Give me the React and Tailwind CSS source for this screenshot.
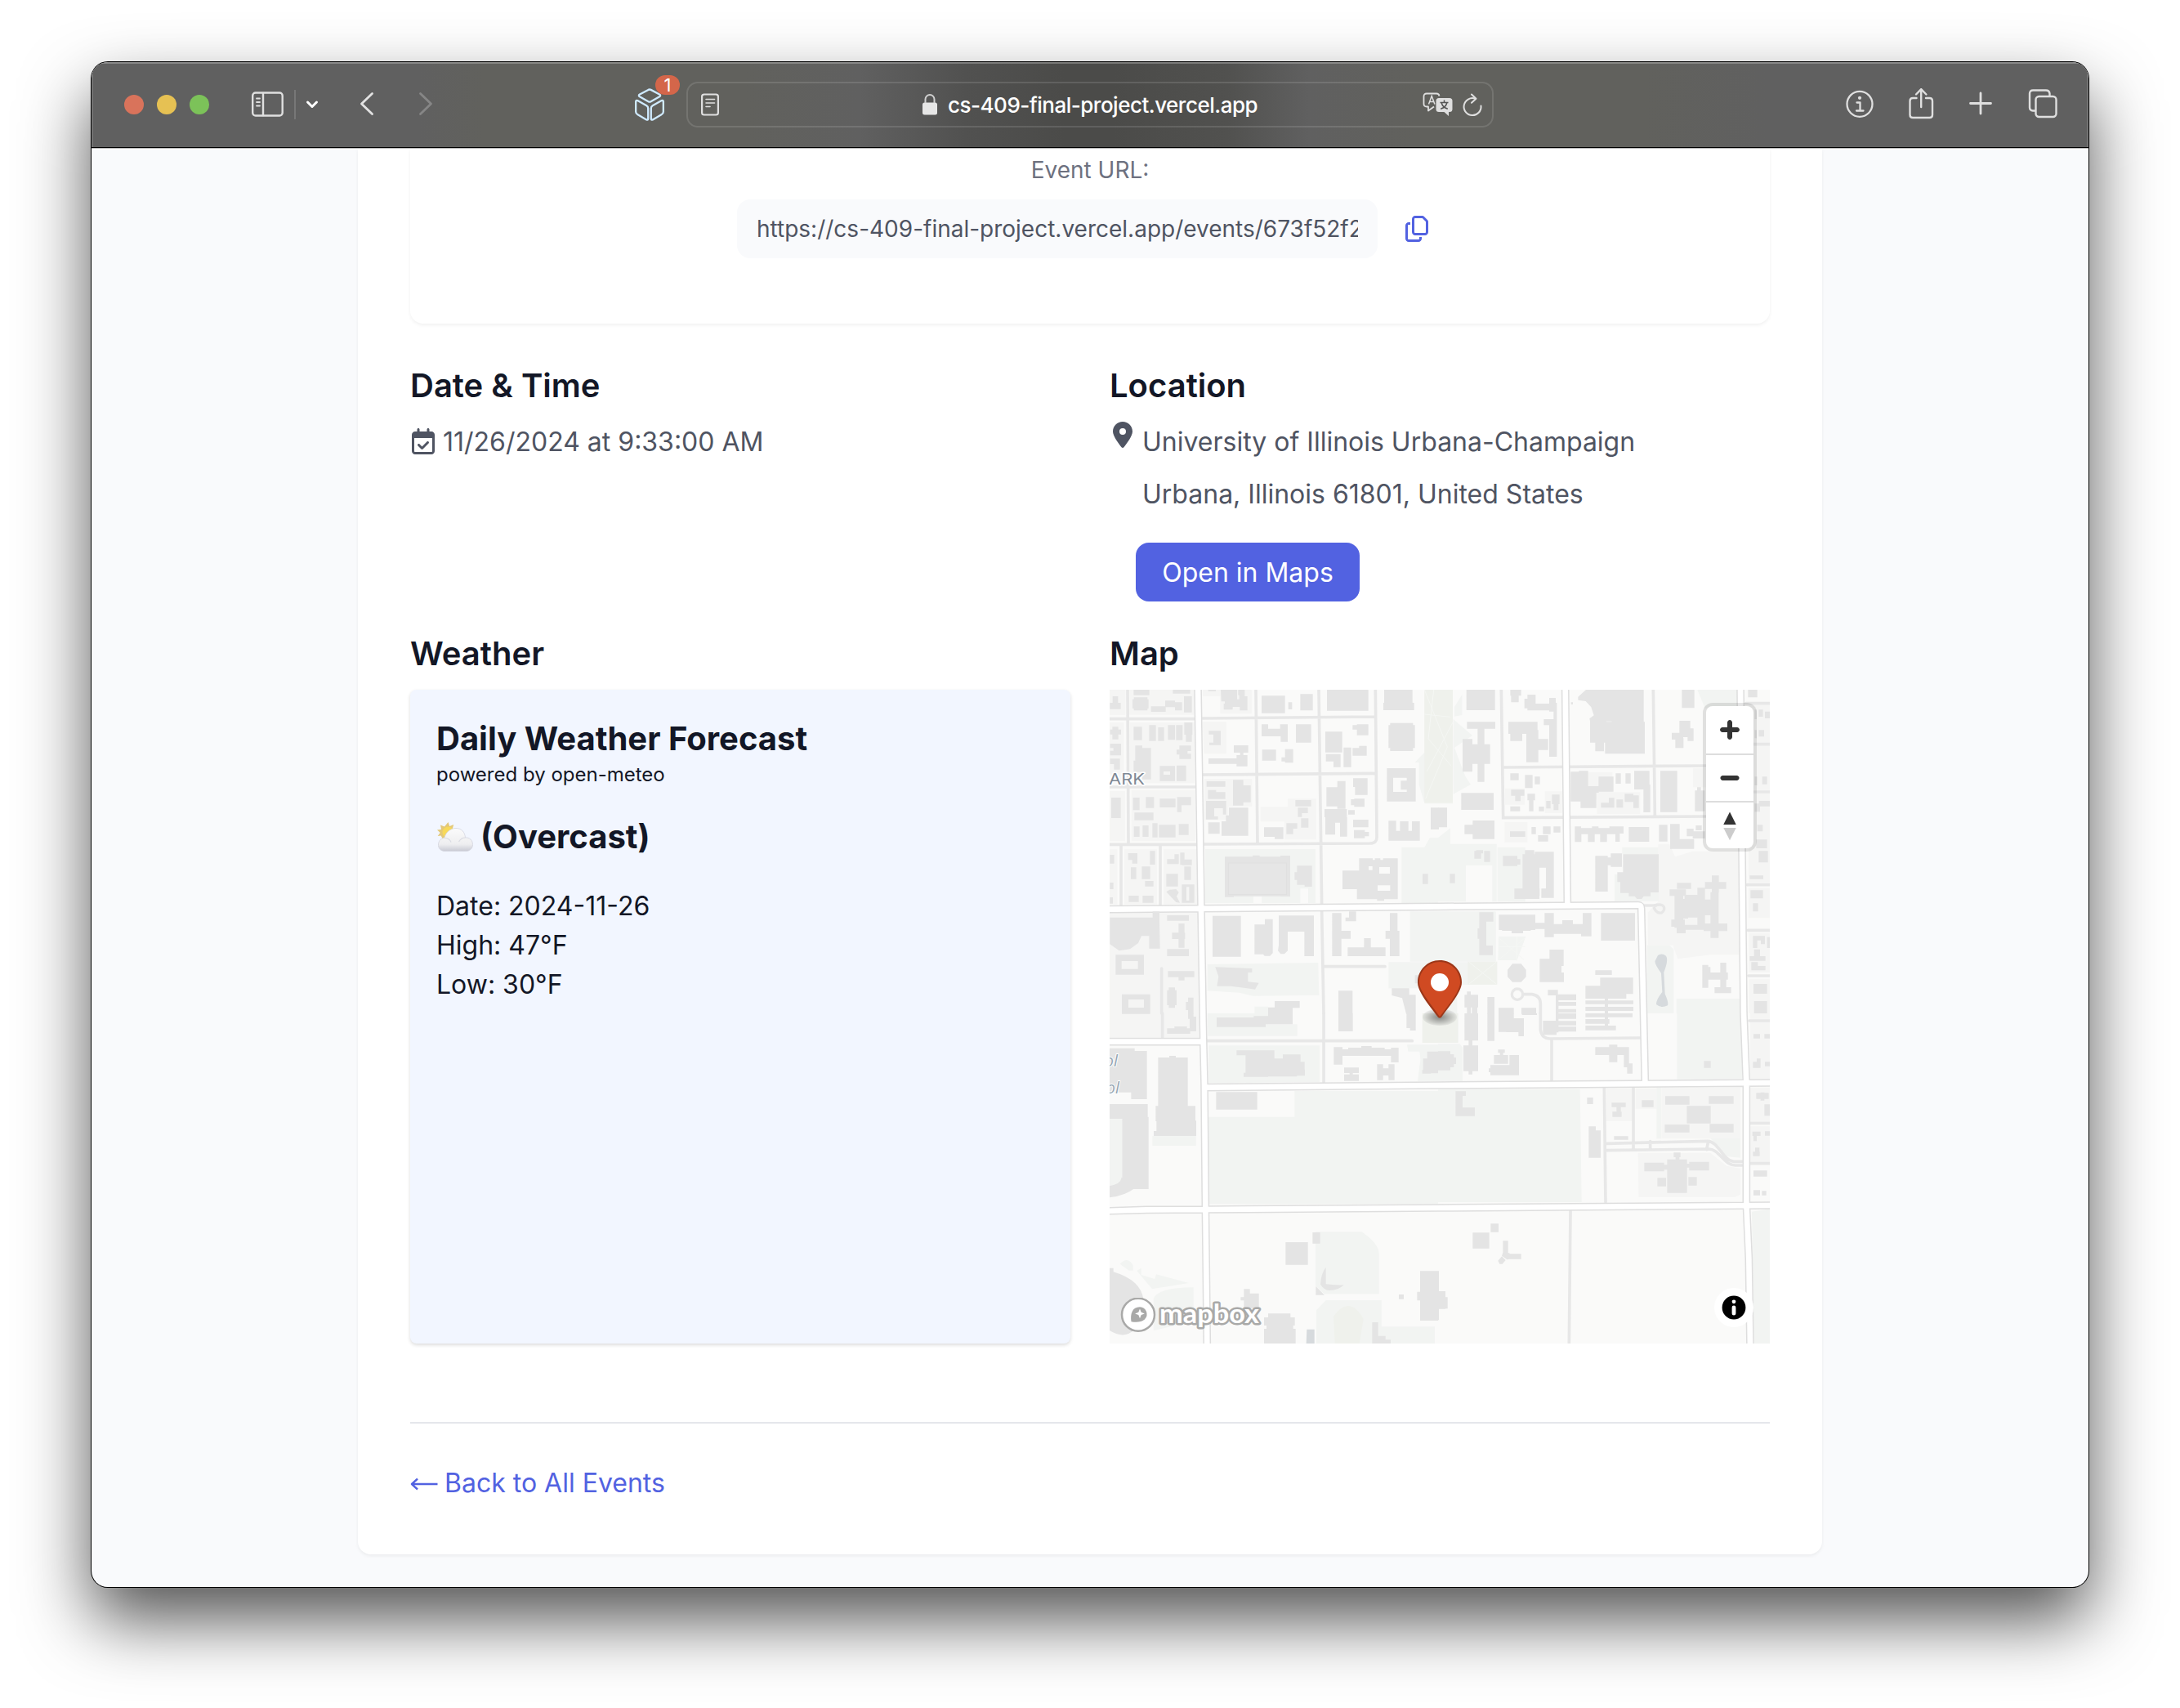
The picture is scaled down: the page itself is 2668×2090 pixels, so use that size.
import React from "react";
import { FaRegCopy, FaRegCalendarCheck, FaLocationDot } from "react-icons/fa6";

/* ---------- Map data: four tiles, each in its own coordinates ---------- */

const r = (list) => list.map(([x, y, w, h]) => `M${x} ${y}h${w}v${h}h${-w}z`).join("");

const BUILDINGS_NW =
  r([
    [25, 60, 40, 23], [35, 36, 20, 25], [112, 12, 58, 20], [113, 40, 50, 48], [108, 47, 59, 34], [176, 73, 54, 20],
    [228, 52, 36, 24], [264, 58, 26, 30], [297, 36, 29, 59], [256, 12, 64, 14], [386, 12, 28, 5],
    [582, 34, 86, 64], [680, 58, 14, 26], [724, 28, 46, 60], [822, 12, 152, 77], [1032, 12, 104, 60], [1029, 60, 113, 27],
    [34, 148, 22, 46], [26, 158, 40, 18], [112, 148, 31, 49], [169, 142, 25, 58], [202, 150, 22, 50],
    [238, 142, 26, 54], [268, 142, 24, 55], [298, 132, 30, 45], [304, 177, 22, 26],
    [480, 216, 53, 27], [490, 252, 40, 41], [503, 243, 12, 9], [387, 264, 104, 20],
    [708, 139, 56, 67], [584, 232, 51, 40], [668, 230, 30, 50], [655, 260, 30, 15], [816, 166, 62, 76], [932, 139, 42, 40], [916, 142, 18, 16],
    [1054, 134, 84, 103], [1048, 142, 97, 84], [118, 217, 26, 56], [112, 272, 34, 42], [144, 226, 32, 115],
    [280, 217, 30, 49], [270, 232, 12, 18], [308, 217, 15, 20], [308, 247, 15, 19], [26, 210, 40, 16], [38, 226, 28, 10], [26, 236, 40, 17], [26, 265, 36, 20], [40, 285, 22, 20],
    [270, 290, 35, 57], [883, 224, 28, 72], [916, 226, 52, 28], [940, 218, 28, 12], [818, 248, 54, 27], [846, 275, 26, 21],
    [30, 408, 35, 75], [110, 408, 24, 46], [157, 406, 30, 40], [208, 412, 58, 32], [272, 406, 51, 30], [272, 430, 16, 31],
    [115, 463, 70, 28], [113, 514, 21, 38], [145, 510, 22, 42], [181, 502, 19, 52], [205, 508, 61, 46], [278, 505, 36, 40],
    [380, 348, 69, 20], [385, 380, 30, 10], [385, 388, 64, 25], [477, 343, 38, 94], [515, 363, 27, 62], [386, 499, 42, 42],
    [706, 417, 58, 23], [715, 445, 37, 20], [715, 465, 15, 14], [727, 484, 27, 34], [591, 517, 71, 35], [630, 550, 32, 10], [673, 502, 40, 20], [673, 520, 25, 22],
    [820, 370, 40, 70], [860, 347, 30, 102], [813, 450, 82, 30], [816, 480, 36, 64], [850, 480, 20, 20], [870, 480, 26, 71], [925, 337, 46, 61], [918, 337, 53, 32],
    [922, 412, 38, 30], [910, 414, 14, 22], [900, 454, 24, 16], [918, 489, 56, 28], [921, 527, 40, 30], [958, 534, 18, 16], [1203, 445, 30, 80],
    [25, 618, 16, 32], [92, 612, 34, 25], [107, 635, 19, 15], [172, 604, 19, 50], [102, 664, 20, 43], [142, 661, 31, 46], [154, 714, 31, 20],
    [94, 768, 37, 23], [145, 768, 40, 26], [25, 720, 13, 24], [25, 774, 11, 23], [262, 616, 16, 36], [235, 634, 40, 18],
    [283, 610, 16, 45], [290, 635, 36, 21], [298, 661, 25, 49], [232, 688, 43, 46],
    [447, 625, 240, 145], [549, 620, 26, 10], [651, 621, 36, 10], [447, 765, 33, 8], [651, 765, 36, 6], [712, 658, 55, 70], [703, 682, 15, 28], [740, 725, 27, 10], [1173, 688, 20, 37],
    [235, 840, 80, 20], [277, 870, 22, 89], [253, 904, 48, 23], [235, 964, 80, 26],
    [238, 1045, 97, 22], [277, 1067, 22, 12], [235, 1115, 35, 55], [241, 1105, 23, 75], [312, 1142, 20, 60], [304, 1158, 20, 30],
    [402, 842, 104, 150], [841, 832, 34, 158], [875, 897, 34, 29], [903, 826, 26, 36], [890, 848, 20, 14],
    [1053, 832, 28, 158], [1037, 897, 51, 29], [1058, 926, 30, 64], [898, 958, 139, 32], [958, 924, 25, 34],
    [864, 1117, 52, 85], [1145, 1060, 15, 30], [630, 1155, 92, 25], [606, 1178, 90, 24],
  ]) +
  "M432 12h60v35h8v-15h-4v-20h24v24h10v52h-28v-13h-26v10h-33v-22h4v-8h-13z" +
  "M388 163h44v52h-42v-9h15v-30h-17z" +
  "M582 139h24v16h44v-16h28v64h-26v-20h-70z" +
  "M208 292h56v55h-56zM222 312v12h24v-12z" +
  "M1042 300h106v122h-106zM1065 335v52h50v-8h-22v-33h22v-11z" +
  "M378 420h74v50h-12v-23h-32v30h14v11h-44z" +
  "M462 445h71v103h-98v-53h16v-22h11z" +
  "M1048 493h28v37h14v-35h31v35h13v-35h29v71h-115z" +
  "M289 727h46v67h-46zM306 736v50h10v-50z" +
  "M232 754l12-8 24-2 10 12-8 14 12 24-14-2z" +
  "M940 631h50v6h8v-6h20v6h10v-6h54v150h-50v6h-26v-6h-74v-37h-53v-68h61zM975 660v14h14v-14zM1014 663v24h39v-24zM1008 730v20h46v-20z" +
  "M25 848h157v-22h25v40l2 96h-40v-46h-28l-12 26-30 22-40 6-34-24z" +
  "M46 985h104v73h-104zM68 1008v29h60v-29z" +
  "M69 1130h104v72h-104zM93 1149v30h57v-30z" +
  "M556 874h38v-20h29v125l-10 10h-20l-5-6h-32z" +
  "M645 841h129v149h-35v-90h-61v70l-12 12h-14l-10-12 3-20z" +
  "M412 1030l135 5v15h-15v34l40 4-14 24-90-12-50 0 6-35z" +
  "M1060 1108h64v24h24v70h-35l-15-58-38-10z";

const BUILDINGS_NE =
  r([
    [104, 12, 105, 75], [106, 130, 104, 25], [145, 155, 25, 195], [90, 193, 36, 120], [120, 212, 71, 72], [85, 391, 119, 62], [0, 445, 33, 72],
    [127, 492, 80, 68], [97, 508, 32, 34], [265, 12, 40, 22], [268, 12, 28, 46], [328, 30, 30, 58], [317, 45, 20, 35], [355, 63, 70, 25], [408, 42, 24, 50],
    [258, 130, 107, 44], [265, 170, 44, 30], [324, 160, 44, 118], [366, 193, 38, 40], [388, 120, 48, 22], [408, 140, 28, 118], [424, 60, 12, 80],
    [265, 319, 31, 25], [319, 325, 28, 48], [355, 331, 19, 28], [268, 379, 49, 22], [283, 395, 20, 26], [265, 440, 36, 18],
    [328, 394, 28, 24], [334, 410, 16, 48], [370, 441, 19, 17], [397, 420, 16, 28], [418, 397, 28, 35], [424, 430, 18, 24],
    [264, 532, 56, 20], [343, 516, 16, 26], [385, 514, 28, 28], [367, 546, 37, 23], [424, 514, 25, 22], [488, 58, 7, 8],
    [638, 12, 117, 160], [613, 130, 146, 117], [558, 128, 60, 78], [577, 204, 32, 34],
    [895, 12, 46, 67], [886, 126, 40, 60], [858, 170, 42, 25], [871, 190, 30, 36], [916, 154, 22, 46],
    [487, 313, 30, 76], [517, 310, 34, 80], [487, 389, 36, 33], [523, 386, 58, 60], [550, 366, 40, 24], [589, 331, 55, 55],
    [652, 319, 19, 38], [688, 319, 19, 37], [598, 427, 49, 18], [627, 409, 20, 30], [655, 415, 24, 30], [685, 394, 32, 30], [717, 400, 20, 46],
    [720, 310, 56, 68], [754, 360, 25, 102], [816, 310, 62, 151], [943, 382, 36, 76], [951, 370, 14, 20],
    [811, 508, 31, 61], [852, 505, 35, 91], [852, 560, 88, 36], [913, 522, 25, 28], [946, 510, 22, 18], [935, 532, 45, 26],
    [700, 516, 75, 54], [133, 604, 25, 28], [169, 604, 22, 40], [140, 601, 25, 12], [43, 688, 19, 34], [238, 622, 53, 37], [290, 634, 12, 20],
    [310, 616, 62, 164], [319, 601, 34, 20], [280, 742, 68, 38], [355, 607, 70, 58], [396, 660, 29, 116], [379, 742, 30, 34], [355, 742, 18, 26],
    [577, 622, 46, 131], [590, 628, 50, 28], [634, 613, 41, 49], [679, 616, 131, 140], [658, 682, 50, 36], [669, 710, 62, 48], [700, 750, 80, 20],
    [151, 829, 52, 34], [151, 829, 26, 157], [145, 888, 20, 38], [160, 951, 41, 35],
    [223, 838, 134, 56], [235, 880, 105, 17], [270, 895, 42, 11], [355, 868, 37, 22], [598, 832, 125, 101],
    [373, 1000, 80, 85], [409, 966, 52, 60], [430, 1050, 32, 35], [577, 1042, 61, 17], [595, 1069, 121, 60], [541, 1099, 150, 47], [403, 1114, 37, 20], [432, 1130, 75, 22],
    [432, 1158, 75, 14], [432, 1184, 75, 13], [432, 1130, 10, 70], [541, 1153, 176, 13], [541, 1176, 176, 15], [612, 1146, 12, 54],
    [97, 1132, 50, 46], [106, 1120, 14, 80], [97, 1156, 50, 20], [124, 1176, 20, 24], [181, 1140, 26, 62], [222, 1180, 56, 22], [306, 1180, 54, 22],
    [877, 721, 52, 22], [850, 745, 60, 24], [868, 780, 50, 72], [868, 760, 32, 126], [856, 856, 50, 26], [876, 880, 33, 26], [900, 875, 100, 18], [905, 765, 50, 60], [900, 820, 75, 28],
    [952, 739, 28, 150], [1005, 694, 26, 62], [980, 718, 78, 25], [1000, 755, 30, 168], [980, 820, 50, 20], [975, 870, 87, 28], [980, 782, 25, 40],
    [970, 1022, 22, 84], [970, 1030, 30, 26], [1036, 1014, 22, 95], [990, 1050, 74, 26], [1015, 1104, 61, 22],
    [1138, 12, 34, 28], [1177, 85, 16, 26], [1200, 92, 18, 25], [1177, 160, 20, 24], [1162, 85, 8, 35], [1162, 160, 8, 30], [1190, 331, 18, 28], [1162, 331, 10, 32],
    [1178, 420, 40, 20], [1162, 430, 20, 30], [1172, 508, 20, 24], [1168, 562, 40, 32], [1177, 604, 34, 42], [1144, 694, 50, 13], [1147, 748, 46, 30], [1156, 796, 19, 30],
    [1156, 916, 16, 44], [1156, 916, 44, 16], [1185, 916, 15, 30], [1144, 990, 58, 17], [1160, 965, 22, 40], [1150, 1012, 24, 30], [1168, 1026, 34, 16], [1158, 1092, 50, 36], [1160, 1155, 48, 45], [1208, 920, 10, 40],
  ]) +
  "M543 12h100v116h-85l-2-10 16-12-10-30-20-22-28-4v-12z" +
  "M502 514h23v6h40v-6h24v6h40v-6h52v26h-14v30h-16v-28h-31v29h-25v-29h-20v29h-25v-29h-24v29h-24z" +
  "M391 832h34v40h31v-14h39v14h36v-40h32v85h-38v-9h-100v12h-34z" +
  "M255 1040l18-22h32l18 22v26l-18 19h-32l-18-19z" +
  "M720 768h36l-8 12h-18z";

const BUILDINGS_SW =
  r([
    [417, 15, 180, 35], [553, 10, 143, 30], [606, 0, 90, 20], [235, 55, 85, 20], [318, 12, 24, 54], [262, 48, 46, 12], [312, 0, 20, 20], [864, 0, 53, 66], [1114, 0, 34, 54], [1127, 50, 21, 13],
    [24, 138, 134, 152], [103, 138, 58, 177], [24, 128, 92, 14], [202, 162, 109, 178], [243, 156, 24, 10], [193, 340, 146, 56], [196, 394, 146, 56], [186, 432, 14, 18],
    [490, 136, 139, 18], [523, 140, 106, 78], [516, 218, 90, 15], [606, 166, 106, 66], [660, 151, 65, 40], [700, 178, 40, 30], [708, 206, 33, 23],
    [847, 124, 32, 64], [847, 132, 210, 24], [900, 126, 134, 20], [948, 120, 38, 10], [1057, 126, 28, 54],
    [885, 199, 54, 20], [885, 224, 54, 24], [905, 215, 12, 12], [1006, 187, 22, 58], [1048, 187, 22, 58], [1020, 202, 36, 26], [1175, 166, 55, 42], [1190, 140, 40, 80], [1172, 208, 32, 13],
    [415, 289, 151, 64], [24, 333, 140, 54], [70, 380, 97, 265], [670, 840, 82, 83], [769, 804, 28, 41],
    [517, 1012, 22, 70], [530, 1028, 42, 54], [505, 1042, 20, 12], [591, 1116, 113, 30], [606, 1102, 82, 30], [600, 1140, 98, 20], [591, 1158, 116, 54],
    [1164, 946, 66, 182], [1153, 1022, 20, 32], [1086, 1032, 18, 17], [988, 1134, 22, 78], [1005, 1184, 32, 28], [1030, 1198, 26, 14],
  ]) +
  "M24 632q40-4 44-30l48 30v10q-36 28-92 34z" +
  "M24 935h14v14q100 30 110 100t-30 110-94 5z" +
  "M818 932v62q30 4 66 3-20 20-52 20-20 0-34-22 2-40 20-63z" +
  "M781 1002l32 32h-32z";

const BUILDINGS_SE =
  r([
    [97, 0, 50, 100], [112, 96, 14, 24], [93, 118, 54, 94], [112, 210, 14, 14], [181, 0, 26, 101], [222, 0, 56, 68], [250, 18, 65, 51], [295, 60, 20, 24], [308, 0, 55, 6],
    [205, 153, 52, 32], [220, 133, 25, 12], [227, 145, 12, 10], [262, 153, 35, 40], [192, 190, 105, 37], [186, 202, 12, 14],
    [0, 139, 45, 70], [40, 150, 18, 48], [55, 162, 11, 24],
    [385, 27, 50, 52], [432, 0, 75, 20], [432, 28, 75, 16], [432, 49, 75, 18], [432, 0, 10, 70], [541, 0, 173, 14], [541, 21, 88, 17], [541, 45, 112, 17], [612, 0, 12, 45],
    [577, 124, 124, 29], [628, 115, 30, 64], [682, 150, 19, 48], [694, 184, 20, 37], [976, 175, 25, 25],
    [64, 286, 38, 17], [64, 286, 26, 91], [64, 346, 71, 31], [547, 309, 22, 24], [553, 415, 26, 115], [570, 430, 27, 100],
    [637, 328, 52, 16], [655, 340, 16, 24], [640, 361, 34, 19], [646, 451, 52, 13], [748, 319, 43, 25],
    [834, 304, 89, 31], [994, 304, 91, 28], [913, 340, 88, 64], [832, 408, 91, 29], [997, 406, 88, 31],
    [757, 548, 73, 32], [922, 545, 73, 32], [841, 536, 73, 123], [865, 511, 25, 17], [872, 526, 14, 12], [828, 556, 14, 18], [914, 552, 12, 14], [805, 604, 32, 31], [919, 601, 31, 31],
    [1158, 76, 24, 16], [1198, 76, 20, 16], [1156, 178, 28, 22], [1170, 166, 14, 30], [1200, 178, 18, 16], [1168, 292, 46, 22], [1184, 290, 14, 30], [1198, 334, 20, 42],
    [1154, 434, 30, 16], [1158, 445, 12, 24], [1200, 433, 18, 16], [1156, 508, 25, 16], [1164, 493, 16, 30], [1158, 577, 50, 22], [1158, 649, 24, 19], [1189, 652, 16, 16],
    [127, 805, 61, 58], [193, 772, 29, 31], [238, 835, 19, 46], [262, 883, 43, 19], [0, 1020, 27, 65], [15, 1042, 20, 42], [0, 946, 3, 180],
  ]) +
  "M238 878l24 2 6 20-14 4-20-14z" +
  "M220 908l14-16 14 14-12 14h-10z";

const PARKS = {
  nw: "M375 597H780V795H375zM1096 590H1230V795H1096zM1127 826H1230V1010H1127zM383 1020L790 1014 793 1133 550 1136 500 1124 383 1117zM1048 1012H1230V1108H1048zM1180 12H1230V430H1180L1160 360V280L1145 278 1180 242zM1200 555H1230V590H1180zM556 1175h50v25h-50z",
  ne: "M0 12H54V430H0zM56 120L126 180 60 225 100 330 120 360 56 395zM60 75L88 30V105L60 110zM0 555L45 520V578H215V790H0zM218 590H320V790H218zM0 826H108V1010H0zM108 826H212V1010H108zM222 918H322L290 1005H220zM648 690H810V788H648zM676 590H808V616H676zM952 12H1098V80H980zM768 950H850L865 965V1200H768zM875 1146H1112V1200H875zM0 1012H216V1095H70V1200H0z",
  sw: "M383 0H606V40H713V83H385zM388 118L795 118V252L388 256zM386 380H703V285H1230V700H388zM1116 115H1230V248H1155L1165 170 1162 140H1120zM24 388H70V600L60 630H24zM181 450H341V486H181zM780 802H950Q1012 845 1013 880V1030H812L780 1000zM818 1053H1022V1150H1218V1212H783V1090zM62 920Q90 890 110 925V944H95zM124 945L140 935V960L190 975 195 958 315 990 180 1012zM185 1048Q200 1006 332 1006V1130L185 1165z",
  se: "M0 278H521L527 693H0zM0 112H80L90 125V248H0zM877 0H1116V242H877zM802 272h17v188h-17zM1000 458H1110V530L1060 525zM1152 728L1218 718V1212H1160zM0 0H75V108H0z",
};

const BLOCKS = {
  nw: "M24 12H82V105H24zM97 12H334V104H97zM24 132H76V355H24zM98 132H336V355H98zM24 384H80V568H24zM104 380H338V568H104zM24 598H52V800H24zM78 598H198V800H78zM222 598H346V800H222zM366 130H452V247H370zM430 12H545V100H430zM366 12H430V35H366zM372 340H547V440H460V490H372zM578 442L678 442V412H782V562H666V496H578zM24 832H350V1200H24z",
  ne: "M246 374H318V434H246zM392 385H455V465H392zM244 498H328V572H244zM486 315H640V388H742V468H583V415H486zM808 580H850L870 625 935 605H1108V985H1000L880 1000 862 950H770V830L808 790zM1140 60H1218V720H1140zM1140 740H1218V850H1140zM1142 905H1218V1050H1142zM1142 1075H1218V1200H1142zM936 300H984V370H936z",
  sw: "M24 0H352V88H24z",
  se: "M618 275H712V395H618zM725 275H802V350H725zM820 272H1110V460H820zM734 512H1000L1060 560 1110 570V665L1090 674H736zM1146 0H1218V240H1146zM1146 272H1218V395H1146zM1146 415H1218V545H1146z",
};

const MINOR = {
  nw: "M24 119H340M90 12L93 578M24 369H342M24 580H345M66 580V805M210 585V805M365 117L1000 111M561 12L567 575M365 324L990 319Q1003 319 1003 325M1000 12L1005 550Q1007 575 980 576L370 579M792 12L803 805M803 825L810 1200M810 1028H1035M215 1035V1200",
  ne: "M232 12L239 482 984 477M240 297L984 291M790 12L796 477M755 804H800M1130 62H1218M1130 212H1218M1130 387H1218M1135 728H1218M1138 895H1218M1140 1062H1218M315 1130H345Q376 1135 376 1165V1200",
  sw: "M381 101H1135M810 0V255M218 0V90",
  se: "M376 0V60Q380 92 410 93L740 90M417 95V245M610 270L615 693M717 270V495M618 478L990 469C1030 470 1045 540 1085 544H1116M618 503L995 498C1035 500 1050 560 1095 558H1116M779 470V500M992 470L986 500M486 725L481 1212M1143 27H1218M1143 403H1218M1143 551H1218",
};

/* Wide streets that cross several tiles */
const MAJOR =
  "M348 0L360 810 368 1290 372 1460 376 1900 382 2424" +
  "M0 818L1230 808 1965 803Q1976 803 1976 815L1990 1455" +
  "M1697 0L1705 800" +
  "M2340 0L2352 1200 2362 1455 2362 1900 2371 2100 2376 2424" +
  "M0 1304H367" +
  "M370 1472L1230 1464 2450 1455" +
  "M0 1926L160 1921 380 1920 1230 1914 2450 1905";

const TILES = [
  ["nw", "translate(-24 -12)", BUILDINGS_NW],
  ["ne", "translate(1206 -12)", BUILDINGS_NE],
  ["sw", "translate(-24 1188)", BUILDINGS_SW],
  ["se", "translate(1206 1188)", BUILDINGS_SE],
];

function MapCanvas() {
  return (
    <svg viewBox="0 0 2424 2400" className="block h-full w-full">
      <rect width="2424" height="2400" fill="#fafaf9" />
      {TILES.map(([k, t]) => (
        <g key={k} transform={t}>
          <path d={BLOCKS[k]} fill="#f5f5f4" />
          <path d={PARKS[k]} fill="#f2f4f2" />
        </g>
      ))}
      <g fill="#eff1ec">
        <path d="M1156 0H1260V415H1156z" />
        <path d="M1148 1188h130v108h-130zM1315 998h108v84h-108zM822 2300q60-80 110 10l-15 90h-90z" />
      </g>
      <g stroke="#f5f7f4" strokeWidth="3" fill="none">
        <path d="M1156 0L1240 210 1160 400M1156 90L1250 100M1190 0L1170 180 1255 280M1260 120L1165 300" />
        <path d="M1428 910L1520 990M1526 910L1430 990M1495 905V995M1430 943H1526M1320 1000L1420 1080M1420 1000L1320 1080" />
      </g>
      <g fill="#fafaf9">
        <path d="M1308 645h97v133h-97zM528 758h31v40h-31zM700 730h29v65h-29z" />
      </g>
      <path d="M2013 975q14-10 30 2 10 15-8 60l4 80q14 30 10 42-24 12-42-4 0-20 22-45l-4-70q-26-35-22-45zM724 2348h28v52h-30z" fill="#d6dadd" />
      {TILES.map(([k, t]) => (
        <path key={k} d={MINOR[k]} transform={t} fill="none" stroke="#e7e7e7" strokeWidth="11" strokeLinecap="round" />
      ))}
      <circle cx="1497" cy="1118" r="20" fill="none" stroke="#e7e7e7" strokeWidth="10" />
      <path d="M1998 792q40-10 38 14-6 18-22 12-12-6-16-20" fill="none" stroke="#e7e7e7" strokeWidth="10" />
      <g transform="translate(-24 -12)" fill="none" strokeLinejoin="round">
        <path d={MAJOR} stroke="#dedede" strokeWidth="29" />
        <path d={MAJOR} stroke="#ffffff" strokeWidth="20" />
      </g>
      {TILES.map(([k, t, d]) => (
        <path key={k} d={d} transform={t} fill="#e4e4e4" />
      ))}
      <g fill="#e6e6e6" stroke="#dfdfdf" strokeWidth="2">
        <rect x="436" y="636" width="214" height="116" />
      </g>
      <g stroke="#ffffff" strokeWidth="9" strokeLinejoin="round" style={{ paintOrder: "stroke" }}>
        <text x="-40" y="348" fontSize="55" fontFamily="Inter, sans-serif" textLength="169" lengthAdjust="spacingAndGlyphs" fill="#7e8894">PARK</text>
        <g fontSize="58" fontStyle="italic" fontFamily='"Open Sans", sans-serif' fill="#93a4b2" strokeWidth="6">
          <text x="-18" y="1382">ol</text>
          <text x="-12" y="1481">ol</text>
        </g>
      </g>
    </svg>
  );
}

function Marker() {
  return (
    <svg viewBox="0 0 27 41" className="absolute top-[331px] left-[377px] h-[82px] w-[54px]">
      <defs>
        <radialGradient id="pinShadow">
          <stop offset="10%" stopOpacity="0.4" />
          <stop offset="100%" stopOpacity="0.05" />
        </radialGradient>
      </defs>
      <ellipse cx="13.5" cy="34.8" rx="10.5" ry="5.25" fill="url(#pinShadow)" />
      <path fill="#d04a22" d="M27,13.5C27,19.07 20.25,27 14.75,34.5C14.02,35.5 12.98,35.5 12.25,34.5C6.75,27 0,19.22 0,13.5C0,6.04 6.04,0 13.5,0C20.96,0 27,6.04 27,13.5Z" />
      <path opacity="0.25" d="M13.5,0C6.04,0 0,6.04 0,13.5C0,19.22 6.75,27 12.25,34.5C13,35.52 14.02,35.5 14.75,34.5C20.25,27 27,19.07 27,13.5C27,6.04 20.96,0 13.5,0ZM13.5,1C20.42,1 26,6.58 26,13.5C26,15.9 24.5,19.18 22.22,22.74C19.95,26.3 16.71,30.14 13.94,33.91C13.74,34.18 13.61,34.32 13.5,34.44C13.39,34.32 13.26,34.18 13.06,33.91C10.28,30.13 7.41,26.31 5.02,22.77C2.62,19.23 1,15.95 1,13.5C1,6.58 6.58,1 13.5,1Z" />
      <circle fill="white" cx="13.5" cy="13.5" r="5.5" />
    </svg>
  );
}

function MapControls() {
  return (
    <div className="absolute top-[20px] right-[20px] flex w-[58px] flex-col rounded-[8px] bg-white shadow-[0_0_0_4px_rgba(0,0,0,0.1)]">
      <svg viewBox="0 0 29 29" className="h-[58px] w-[58px]" fill="#333">
        <path d="M14.5 8.5c-.75 0-1.5.75-1.5 1.5v3h-3c-.75 0-1.5.75-1.5 1.5S9.25 16 10 16h3v3c0 .75.75 1.5 1.5 1.5S16 19.75 16 19v-3h3c.75 0 1.5-.75 1.5-1.5S19.75 13 19 13h-3v-3c0-.75-.75-1.5-1.5-1.5z" />
      </svg>
      <svg viewBox="0 0 29 29" className="h-[58px] w-[58px] border-t-2 border-[#ddd]" fill="#333">
        <path d="M10 13c-.75 0-1.5.75-1.5 1.5S9.25 16 10 16h9c.75 0 1.5-.75 1.5-1.5S19.75 13 19 13h-9z" />
      </svg>
      <svg viewBox="0 0 29 29" className="h-[58px] w-[58px] border-t-2 border-[#ddd]">
        <path d="M10.5 14l4-8 4 8h-8z" fill="#333" />
        <path d="M10.5 16l4 8 4-8h-8z" fill="#ccc" />
      </svg>
    </div>
  );
}

function MapboxLogo() {
  return (
    <svg viewBox="0 0 184 48" className="absolute bottom-[8px] left-[12px] h-[48px] w-[184px]">
      <circle cx="23" cy="20.7" r="20" fill="#fff" stroke="#a9a9a8" strokeWidth="2.5" />
      <path d="M14.5 29.2c-1.500-9 1-18 10.500-18a8.800 8.800 0 0 1 6 15c-4 4-11 4-16.500 3z" fill="#a9a9a8" />
      <path d="M25 13.500l1.700 4.200 4.200 1.700-4.200 1.700-1.700 4.200-1.700-4.200-4.200-1.700 4.200-1.700z" fill="#fff" />
      <text
        x="49" y="30.500" fontSize="32" fontWeight="700" fontFamily='Lato, sans-serif' textLength="122" lengthAdjust="spacingAndGlyphs"
        fill="#fff" stroke="#a9a9a8" strokeWidth="5" strokeLinejoin="round" style={{ paintOrder: "stroke" }}
      >mapbox</text>
    </svg>
  );
}

function MapPanel() {
  return (
    <div className="relative h-[800px] overflow-hidden">
      <MapCanvas />
      <Marker />
      <MapControls />
      <MapboxLogo />
      <svg viewBox="0 0 20 20" className="absolute right-[20px] bottom-[20px] h-[48px] w-[48px] rounded-full bg-white">
        <path fillRule="evenodd" d="M4 10a6 6 0 1 0 12 0 6 6 0 1 0-12 0m5-3a1 1 0 1 0 2 0 1 1 0 1 0-2 0m0 3a1 1 0 1 1 2 0v3a1 1 0 1 1-2 0" />
      </svg>
    </div>
  );
}

/* ---------- Browser chrome ---------- */

const ICON = "shrink-0 overflow-visible";

function Toolbar() {
  return (
    <div className="flex h-[104px] shrink-0 items-center bg-[linear-gradient(90deg,#606060_0px,#606060_400px,#61615d_480px,#61615d_800px,#606060_940px,#515150_1070px,#4b4b49_1190px,#4b4b49_1250px,#51514f_1390px,#606060_1490px,#61615d_1620px,#61615d_1900px,#606060_2050px)] shadow-[inset_0_2px_0_rgba(255,255,255,0.25),inset_2px_0_0_rgba(255,255,255,0.12),inset_-2px_0_0_rgba(255,255,255,0.12)]">
      <div className="ml-[40px] flex shrink-0 gap-4">
        <span className="h-6 w-6 rounded-full bg-[#d9735b]" />
        <span className="h-6 w-6 rounded-full bg-[#e6c153]" />
        <span className="h-6 w-6 rounded-full bg-[#7cc259]" />
      </div>
      <svg viewBox="0 0 40 32" className={`${ICON} ml-[52px] h-[32px] w-[40px]`} fill="none" stroke="#dfdfdf" strokeWidth="2.4" strokeLinecap="round">
        <rect x="1.200" y="1.500" width="36.500" height="28" rx="3.500" />
        <path d="M14 2V29" />
        <path d="M6 8.500h4M6 13h4M6 17.500h4" strokeWidth="1.800" />
      </svg>
      <span className="ml-[12px] h-[36px] w-[2px] shrink-0 bg-white/15" />
      <svg viewBox="0 0 16 12" className={`${ICON} ml-[12px] h-[12px] w-[16px]`} fill="none" stroke="#fff" strokeWidth="3" strokeLinecap="round" strokeLinejoin="round">
        <path d="M2.500 3l5.500 5.500L13.500 3" />
      </svg>
      <svg viewBox="0 0 18 30" className={`${ICON} ml-[50px] h-[30px] w-[18px]`} fill="none" stroke="#e2e2e2" strokeWidth="2.800" strokeLinecap="round" strokeLinejoin="round">
        <path d="M15.500 1.500L2.500 14l13 12.500" />
      </svg>
      <svg viewBox="0 0 18 30" className={`${ICON} ml-[54px] h-[30px] w-[18px]`} fill="none" stroke="#868686" strokeWidth="2.800" strokeLinecap="round" strokeLinejoin="round">
        <path d="M2.500 1.500l13 12.500-13 12.500" />
      </svg>
      <div className="relative ml-[246px] h-[40px] w-[38px] shrink-0">
        <svg viewBox="0 0 36 38" className="h-[40px] w-[38px] overflow-visible" fill="none" stroke="#cfeaff" strokeWidth="2.200" strokeLinejoin="round">
          <path d="M16.500 1.800q1.500-.8 3 0l10 5.400q2 1.300 0 2.600l-10 5.600q-1.500.8-3 0l-10-5.600q-2-1.300 0-2.600z" />
          <path d="M2 15.500q0-2 2-1.200l10.500 6q1.800 1 1.800 3v12q0 2-2 1.200l-10-5.800q-2.300-1.300-2.300-3.500z" />
          <path d="M34 15.500q0-2-2-1.200l-10.500 6q-1.800 1-1.800 3v12q0 2 2 1.200l10-5.800q2.300-1.300 2.300-3.500z" />
        </svg>
        <span className="absolute -top-[16px] left-[26px] flex h-[24px] w-[30px] items-center justify-center rounded-full bg-[#d4664a] text-[22px] leading-none text-white">1</span>
      </div>
      <div className="ml-[26px] flex h-[56px] w-[988px] shrink-0 items-center rounded-[14px] border-2 border-white/12">
        <svg viewBox="0 0 20 28" preserveAspectRatio="none" className={`${ICON} ml-[16px] h-[28px] w-[22px]`} fill="none" stroke="#dfdfdf" strokeWidth="2" strokeLinecap="round">
          <rect x="1" y="1.500" width="18" height="25" rx="2.500" />
          <path d="M5.500 7.500h9.500M5.500 12h9.500M5.500 16.500h4.500" strokeWidth="1.500" />
        </svg>
        <svg viewBox="0 0 18 26" className={`${ICON} ml-[249px] h-[26px] w-[18px]`}>
          <rect x="0" y="10.500" width="18" height="15" rx="2.500" fill="#e6e6e6" />
          <path d="M3.500 11V6.500a5.500 5.500 0 0 1 11 0V11" fill="none" stroke="#d0d0d0" strokeWidth="2" />
        </svg>
        <span className="ml-[13px] w-[400px] shrink-0 pt-[2px] text-[26px] leading-none font-medium tracking-[-0.5px] whitespace-nowrap text-white">cs-409-final-project.vercel.app</span>
        <svg viewBox="0 0 38 30" className={`${ICON} ml-[181px] h-[30px] w-[38px]`} fill="none">
          <path d="M14 17.500L7 22.500v-5H5q-3.500 0-3.500-3.500V5Q1.500 1.500 5 1.500h12q3 0 3.500 3" stroke="#dfdfdf" strokeWidth="1.800" strokeLinejoin="round" />
          <path d="M7.500 14.500l3.700-10 3.700 10M8.700 11.500h5" stroke="#dfdfdf" strokeWidth="1.500" />
          <path d="M20 7h13q3.500 0 3.500 3.500v10q0 3.500-3.500 3.500h-1v5l-5.500-5H20q-3.500 0-3.500-3.500v-10Q16.500 7 20 7z" fill="#dfdfdf" />
          <path d="M26.500 9.500v2.500M21.500 12.500h10M23.300 13q1 5 7.500 7.300M29.700 13q-1 5-7.500 7.300" stroke="#555" strokeWidth="1.500" />
        </svg>
        <svg viewBox="0 0 22 30" className={`${ICON} ml-[12px] h-[30px] w-[22px]`} fill="none" stroke="#dfdfdf" strokeWidth="2" strokeLinecap="round" strokeLinejoin="round">
          <path d="M21.500 16.500A10.500 10.500 0 1 1 14.500 7.700" />
          <path d="M10 2.500l5.500 5.300-5.500 5" />
        </svg>
      </div>
      <svg viewBox="0 0 36 36" className={`${ICON} ml-[430px] h-[36px] w-[36px]`} fill="none" stroke="#dfdfdf" strokeWidth="2.300">
        <circle cx="18" cy="17.300" r="15.500" />
        <circle cx="18" cy="9.800" r="2.100" fill="#dfdfdf" stroke="none" />
        <path d="M14.500 15.500h4v10M14 25.500h8.500" strokeLinecap="round" strokeLinejoin="round" />
      </svg>
      <svg viewBox="0 0 32 38" className={`${ICON} ml-[41px] h-[38px] w-[32px]`} fill="none" stroke="#dfdfdf" strokeWidth="2.400" strokeLinecap="round" strokeLinejoin="round">
        <g transform="translate(0 -1.500)">
          <path d="M10.500 12.500H6q-3.500 0-3.500 3.500v17q0 3.500 3.500 3.500h20.500q3.500 0 3.500-3.500V16q0-3.500-3.500-3.500H22" />
          <path d="M16.200 23.500V1.800M10 8l6.200-6.300 6.200 6.300" />
        </g>
      </svg>
      <svg viewBox="0 0 28 30" className={`${ICON} ml-[43px] h-[30px] w-[28px]`} fill="none" stroke="#dfdfdf" strokeWidth="2.800" strokeLinecap="round">
        <path d="M14 1v25M1.500 13.500h25" />
      </svg>
      <svg viewBox="0 0 36 38" className={`${ICON} ml-[44px] h-[38px] w-[36px]`} fill="none" stroke="#dfdfdf" strokeWidth="2.400">
        <path d="M9 26.500H6q-4-.5-4-4V5.500q0-4 4-4h16q4 0 4.500 4v3" />
        <rect x="9.500" y="9" width="25" height="25" rx="4" />
      </svg>
    </div>
  );
}

function SunCloud() {
  return (
    <svg viewBox="0 0 48 40" className="h-[40px] w-[48px]">
      <defs>
        <linearGradient id="cloud" x1="0" y1="0" x2="0" y2="1">
          <stop offset="0" stopColor="#fbfbfb" />
          <stop offset="0.700" stopColor="#eeeef0" />
          <stop offset="1" stopColor="#c8c9d3" />
        </linearGradient>
      </defs>
      <path d="M14.500 2l1.700 5 5-2-1.500 5.500-12 12-2-4-4 .500 3-4-3.700-3.500 5-.500-1-5.500 5 2z" fill="#e3c878" />
      <circle cx="14.500" cy="14.500" r="7" fill="#f7d95a" />
      <path d="M12 37.500C5 38 2 33.500 2.500 29 3 24 6.500 21.500 10 21.500 11 14 18 9.500 24 9.500c7 0 11 5 11.500 11.500 5-.500 9 3 9 8.500 0 5-4 8-8 8z" fill="url(#cloud)" stroke="#d3d4de" strokeWidth="0.800" />
      <path d="M10 21.500q6 0 8 5M35.500 21q-5 0-8 5" fill="none" stroke="#d9dae2" strokeWidth="1.200" />
    </svg>
  );
}

const H2 = "text-[40px] leading-[56px] font-semibold text-[#131726]";

export default function App() {
  return (
    <div className="flex min-h-[2090px] w-[2668px] items-start bg-white px-[112px] pt-[76px] font-['Inter',sans-serif]">
      <div className="flex h-[1866px] w-full flex-col overflow-hidden rounded-[20px] bg-[#f9fafc] shadow-[0_0_0_1px_#000,0_40px_84px_rgba(0,0,0,0.68)]">
        <Toolbar />
        <div className="h-[2px] shrink-0 border-t border-black bg-[#b8b8b8]" />
        <main className="mx-auto h-[1720px] w-[1792px] rounded-b-[16px] bg-white px-[64px] shadow-[0_2px_4px_rgba(0,0,0,0.06)]">
          <section className="flex h-[214px] flex-col items-center rounded-b-[16px] pt-[6px] shadow-[0_2px_4px_rgba(0,0,0,0.06)]">
            <p className="text-[28px] leading-[40px] text-[#6d717f]">Event URL:</p>
            <div className="mt-[16px] flex items-center gap-4">
              <div className="h-[72px] w-[784px] rounded-[16px] bg-[#f9fafc] px-6">
                <p className="overflow-hidden text-[28px] leading-[72px] whitespace-nowrap text-[#4f5462]">https://cs-409-final-project.vercel.app/events/673f52f2</p>
              </div>
              <button className="p-4 text-[#5262e1]"><FaRegCopy className="h-[32px] w-[32px]" /></button>
            </div>
          </section>

          <div className="mt-[48px] grid grid-cols-2 gap-x-[48px]">
            <section className="h-[328px]">
              <h2 className={H2}>Date &amp; Time</h2>
              <div className="mt-[16px] flex items-start text-[32px] leading-[50px] text-[#4f5462]">
                <FaRegCalendarCheck className="mt-[8px] mr-[8px] h-[32px] w-[32px]" />
                <span>11/26/2024 at 9:33:00 AM</span>
              </div>
            </section>
            <section>
              <h2 className={H2}>Location</h2>
              <div className="mt-[16px] flex h-[112px] items-start text-[32px] text-[#4f5462]">
                <FaLocationDot className="mr-[8px] h-[32px] w-[32px]" />
                <div className="pt-[1px]">
                  <p className="leading-[48px]">University of Illinois Urbana-Champaign</p>
                  <p className="mt-[16px] leading-[48px]">Urbana, Illinois 61801, United States</p>
                </div>
              </div>
              <button className="mt-[36px] ml-[32px] h-[72px] w-[274px] rounded-[16px] bg-[#5262e1] pt-[2px] text-[32px] leading-[70px] whitespace-nowrap text-white">Open in Maps</button>
            </section>

            <section>
              <h2 className={H2}>Weather</h2>
              <div className="mt-[16px] h-[800px] rounded-[8px] bg-[#f2f6ff] px-[32px] pt-[32px] text-[#131726] shadow-[0_2px_4px_rgba(0,0,0,0.14)]">
                <h3 className="text-[40px] leading-[56px] font-bold">Daily Weather Forecast</h3>
                <p className="text-[24px] leading-[32px]">powered by open-meteo</p>
                <div className="mt-[32px] flex items-center gap-[6px] text-[40px] leading-[56px] font-bold">
                  <SunCloud />
                  <span>(Overcast)</span>
                </div>
                <div className="mt-[33px] text-[32px] leading-[48px]">
                  <p>Date: 2024-11-26</p>
                  <p>High: 47°F</p>
                  <p>Low: 30°F</p>
                </div>
              </div>
            </section>
            <section>
              <h2 className={`${H2} mb-[16px]`}>Map</h2>
              <MapPanel />
            </section>
          </div>

          <div className="mt-[96px] border-t-2 border-[#e5e7eb] pt-[49px]">
            <a className="flex items-center gap-[8px] text-[32px] leading-[48px] text-[#5262e1]">
              <svg viewBox="0 0 34 16" className="mt-[2px] h-[16px] w-[34px]" fill="none" stroke="currentColor" strokeWidth="2.400" strokeLinejoin="round">
                <path d="M2 8h31.500M9 1.500L2 8l7 6.500" />
              </svg>
              <span>Back to All Events</span>
            </a>
          </div>
        </main>
      </div>
    </div>
  );
}
